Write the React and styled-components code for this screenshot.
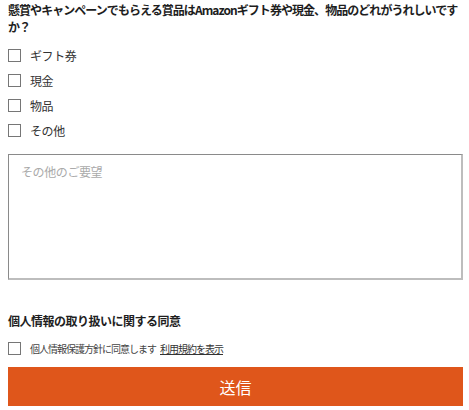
import React from 'react';
import styled, { createGlobalStyle } from 'styled-components';

const options = ['ギフト券', '現金', '物品', 'その他'];

const App = () => {
  return (
    <>
      <GlobalStyle />
      <Form onSubmit={(e) => e.preventDefault()}>
        <Question>
          懸賞やキャンペーンでもらえる賞品はAmazonギフト券や現金、物品のどれがうれしいですか？
        </Question>
        <OptionList>
          {options.map((label) => (
            <OptionRow key={label}>
              <Check type="checkbox" />
              <OptionText>{label}</OptionText>
            </OptionRow>
          ))}
        </OptionList>
        <Request placeholder="その他のご要望" />
        <SectionTitle>個人情報の取り扱いに関する同意</SectionTitle>
        <ConsentRow>
          <Check type="checkbox" />
          <ConsentText>個人情報保護方針に同意します</ConsentText>
          <TermsLink href="#">利用規約を表示</TermsLink>
        </ConsentRow>
        <SubmitButton type="submit">送信</SubmitButton>
      </Form>
    </>
  );
};

export default App;

const GlobalStyle = createGlobalStyle`
  body {
    margin: 0;
    background: #ffffff;
    font-family: 'Noto Sans CJK JP', 'Noto Sans', sans-serif;
    color: #222222;
  }
`;

const Form = styled.form`
  display: flex;
  flex-direction: column;
  padding: 1px 6px 0 8px;
`;

const Question = styled.p`
  margin: 0;
  font-size: 12px;
  font-weight: bold;
  line-height: 17px;
  letter-spacing: -0.95px;
  color: #1e1e1e;
`;

const OptionList = styled.div`
  display: flex;
  flex-direction: column;
  margin-top: 8px;
`;

const OptionRow = styled.label`
  display: flex;
  align-items: center;
  height: 25px;
`;

const Check = styled.input`
  appearance: none;
  flex: none;
  width: 13px;
  height: 13px;
  margin: 0;
  border: 1px solid #767676;
  background: #ffffff;
`;

const OptionText = styled.span`
  margin-left: 9px;
  font-size: 12px;
  line-height: 14px;
  letter-spacing: -0.4px;
  color: #333333;
`;

const Request = styled.textarea`
  box-sizing: border-box;
  width: 100%;
  height: 126px;
  margin: 11px 0 0;
  padding: 8px 12px;
  resize: none;
  border-style: solid;
  border-width: 1px 2px 2px 1px;
  border-color: #8a8a8a #bdbdbd #bdbdbd #8a8a8a;
  font-family: 'Noto Sans CJK JP', 'Noto Sans', sans-serif;
  font-size: 12px;
  letter-spacing: -0.4px;
  color: #333333;

  &::placeholder {
    color: #aaaaaa;
  }
`;

const SectionTitle = styled.h2`
  margin: 32px 0 0;
  font-size: 12px;
  font-weight: bold;
  line-height: 17px;
  letter-spacing: -0.5px;
  color: #1e1e1e;
`;

const ConsentRow = styled.label`
  display: flex;
  align-items: center;
  height: 20px;
  margin-top: 9px;
`;

const ConsentText = styled.span`
  margin-left: 9px;
  font-size: 10px;
  letter-spacing: -1px;
  color: #444444;
`;

const TermsLink = styled.a`
  margin-left: 4px;
  font-size: 10px;
  letter-spacing: -1px;
  color: #333333;
  text-decoration: underline;
`;

const SubmitButton = styled.button`
  height: 39px;
  margin-top: 9px;
  border: none;
  background: #df561b;
  color: #ffffff;
  font-family: 'Noto Sans CJK JP', 'Noto Sans', sans-serif;
  font-size: 16px;
  cursor: pointer;
`;
